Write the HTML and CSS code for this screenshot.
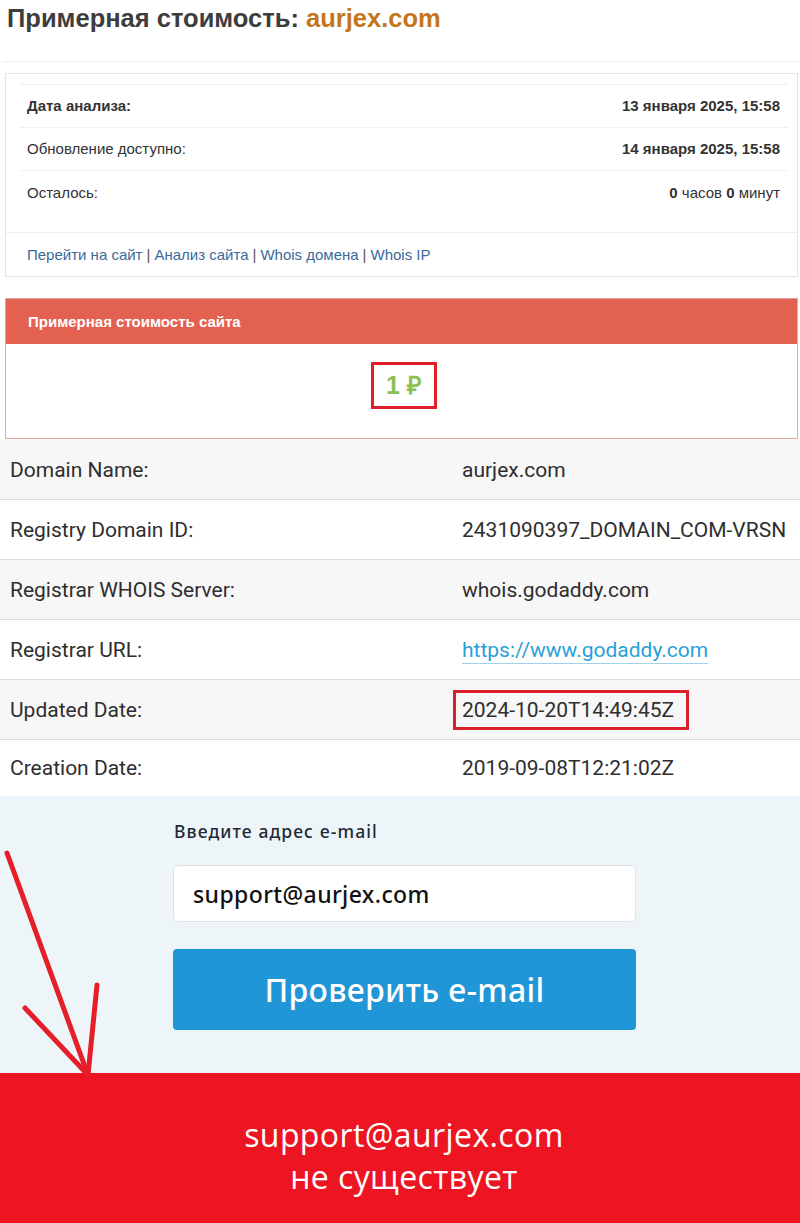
FILE: index.html
```html
<!DOCTYPE html>
<html lang="ru">
<head>
<meta charset="utf-8">
<title>Примерная стоимость: aurjex.com</title>
<link rel="stylesheet" href="styles.css">
</head>
<body>
<div class="page">
  <h1 class="title">Примерная стоимость: <span class="domain">aurjex.com</span></h1>
  <div class="title-rule"></div>

  <div class="info-box">
    <div class="info-inner">
      <div class="info-row">
        <span class="info-label strong">Дата анализа:</span>
        <span class="info-value strong">13 января 2025, 15:58</span>
      </div>
      <div class="info-row">
        <span class="info-label">Обновление доступно:</span>
        <span class="info-value strong">14 января 2025, 15:58</span>
      </div>
      <div class="info-row last">
        <span class="info-label">Осталось:</span>
        <span class="info-value"><b>0</b> часов <b>0</b> минут</span>
      </div>
    </div>
    <div class="info-links">
      <a href="#">Перейти на сайт</a> | <a href="#">Анализ сайта</a> | <a href="#">Whois домена</a> | <a href="#">Whois IP</a>
    </div>
  </div>

  <div class="cost-panel">
    <div class="cost-head">Примерная стоимость сайта</div>
    <div class="cost-body">
      <span class="cost-value">1 ₽</span>
    </div>
  </div>

  <div class="whois">
    <div class="w-row alt"><span class="w-label">Domain Name:</span><span class="w-value">aurjex.com</span></div>
    <div class="w-row"><span class="w-label">Registry Domain ID:</span><span class="w-value">2431090397_DOMAIN_COM-VRSN</span></div>
    <div class="w-row alt"><span class="w-label">Registrar WHOIS Server:</span><span class="w-value">whois.godaddy.com</span></div>
    <div class="w-row"><span class="w-label">Registrar URL:</span><span class="w-value"><a class="w-link" href="#">https://www.godaddy.com</a></span></div>
    <div class="w-row alt"><span class="w-label">Updated Date:</span><span class="w-value"><span class="mark">2024-10-20T14:49:45Z</span></span></div>
    <div class="w-row last"><span class="w-label">Creation Date:</span><span class="w-value">2019-09-08T12:21:02Z</span></div>
  </div>

  <div class="check">
    <div class="check-form">
      <div class="check-label">Введите адрес e-mail</div>
      <div class="check-input">support@aurjex.com</div>
      <div class="check-btn">Проверить e-mail</div>
    </div>
  </div>

  <div class="result">
    <div class="result-text">support@aurjex.com<br>не существует</div>
  </div>

  <svg class="arrow" width="110" height="270" viewBox="0 0 110 270">
    <g fill="none" stroke="#e61e2a" stroke-width="5" stroke-linecap="round">
      <path d="M7 33 L88 255"/>
      <path d="M97 165 L88 255"/>
      <path d="M25 188 L88 255"/>
    </g>
  </svg>
</div>
</body>
</html>
```

FILE: styles.css
```css
* { box-sizing: border-box; }
html, body { margin: 0; padding: 0; background: #fff; }
.page {
  position: relative;
  width: 800px;
  height: 1223px;
  overflow: hidden;
  font-family: "Liberation Sans", Arial, sans-serif;
  color: #333;
}
.title {
  margin: 0;
  padding: 3px 0 0 7px;
  height: 40px;
  font-size: 25.5px;
  font-weight: bold;
  color: #3d3d3d;
  line-height: 30px;
}
.domain { color: #c4761c; }
.title-rule {
  margin: 21px 0 0 3px;
  border-top: 1px solid #eee;
}
.info-box {
  margin: 11px 2px 0 5px;
  border: 1px solid #e3e3e3;
  height: 204px;
  display: flex;
  flex-direction: column;
}
.info-inner {
  margin: 10px 9px 0 14px;
  border-top: 1px solid #f0f0f0;
  height: 148px;
}
.info-row {
  display: flex;
  justify-content: space-between;
  align-items: center;
  height: 43px;
  padding: 0 8px 1px 7px;
  border-bottom: 1px solid #f0f0f0;
  font-size: 15px;
  color: #333;
}
.info-row.last { border-bottom: none; }
.strong { font-weight: bold; }
.info-value b { font-weight: bold; }
.info-links {
  border-top: 1px solid #eee;
  height: 43px;
  display: flex;
  align-items: center;
  padding-left: 21px;
  font-size: 15px;
  color: #555;
}
.info-links a { color: #3a6a9a; text-decoration: none; margin: 0 4px; }
.info-links a:first-child { margin-left: 0; }

.cost-panel {
  margin: 21px 2px 0 5px;
  border: 1px solid #e4a59c;
  height: 141px;
  display: flex;
  flex-direction: column;
}
.cost-head {
  height: 45px;
  background: #e36151;
  color: #fff;
  font-weight: bold;
  font-size: 15px;
  display: flex;
  align-items: center;
  padding-left: 22px;
}
.cost-body {
  flex: 1;
  display: flex;
  justify-content: center;
  align-items: flex-start;
  padding-top: 18px;
}
.cost-value {
  display: inline-block;
  width: 66px;
  height: 47px;
  border: 3px solid #e01f2b;
  color: #8cc152;
  font-weight: bold;
  font-size: 25px;
  line-height: 41px;
  text-align: center;
  margin-left: 5px;
}

.whois {
  margin-top: 1px;
  font-family: Roboto, "Noto Sans", sans-serif;
  font-size: 21px;
  color: #2e2e2e;
}
.w-row {
  display: flex;
  align-items: center;
  height: 60px;
  border-bottom: 1px solid #dcdcdc;
  background: #fff;
}
.w-row.alt { background: #f7f7f7; }
.w-row.last { border-bottom: none; height: 56px; }
.w-label { width: 462px; padding-left: 10px; }
.w-value { flex: 1; }
.w-link {
  color: #2a9fd6;
  text-decoration: none;
  border-bottom: 1px solid #9fd3ec;
  padding-bottom: 1px;
}
.mark {
  display: inline-block;
  margin-left: -9px;
  padding: 3px 12px 3px 6px;
  border: 3px solid #dc1f2b;
  line-height: 28px;
}

.check {
  height: 277px;
  background: #eef5f9;
  display: flex;
  justify-content: flex-start;
  padding-left: 173px;
}
.check-form {
  width: 463px;
  padding-top: 23px;
  font-family: "Noto Sans", "Open Sans", sans-serif;
}
.check-label {
  font-size: 17.5px;
  font-weight: 500;
  letter-spacing: 1.1px;
  color: #1e2a36;
  padding-left: 1px;
  height: 46px;
}
.check-input {
  height: 57px;
  background: #fff;
  border: 1px solid #dde3e8;
  border-radius: 5px;
  font-size: 23px;
  font-weight: 500;
  letter-spacing: 0.4px;
  color: #111;
  display: flex;
  align-items: center;
  padding-left: 19px;
}
.check-btn {
  margin-top: 27px;
  height: 81px;
  background: #2196d6;
  border-radius: 4px;
  color: #fff;
  font-size: 32px;
  font-weight: 500;
  letter-spacing: 0.3px;
  display: flex;
  align-items: center;
  justify-content: center;
}

.result {
  height: 151px;
  background: #ee1522;
  display: flex;
  justify-content: center;
  padding-top: 41px;
}
.result-text {
  color: #fff;
  text-align: center;
  font-family: "Open Sans", "Noto Sans", sans-serif;
  font-size: 32px;
  letter-spacing: 0.4px;
  line-height: 42px;
  padding-left: 8px;
}

.arrow {
  position: absolute;
  left: 0;
  top: 820px;
}
```
